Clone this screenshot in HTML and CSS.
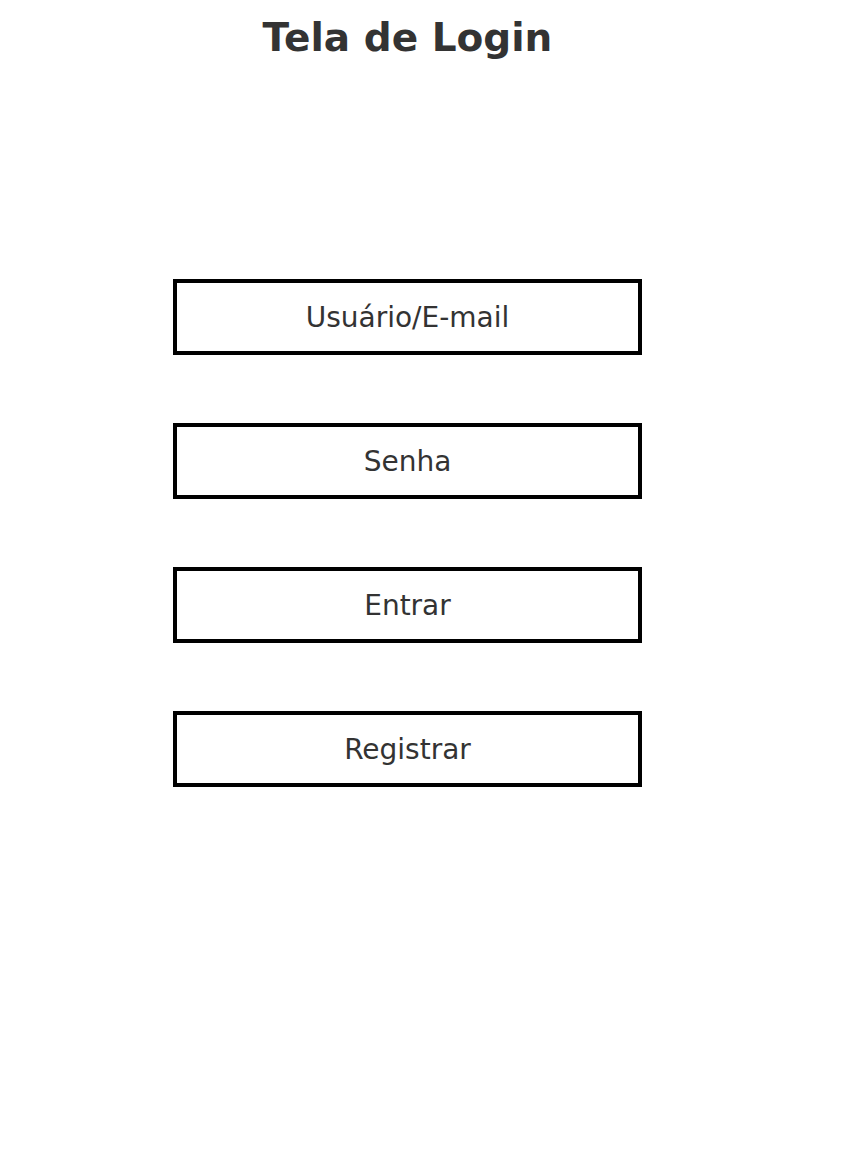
FILE: index.html
```html
<!DOCTYPE html>
<html lang="pt-BR">
<head>
<meta charset="utf-8">
<meta name="viewport" content="width=device-width, initial-scale=1">
<title>Tela de Login</title>
<link rel="stylesheet" href="styles.css">
</head>
<body>
<main class="screen">
  <h1 class="title">Tela de Login</h1>
  <form class="login">
    <input class="control" type="text" placeholder="Usuário/E-mail" aria-label="Usuário/E-mail" autocomplete="username">
    <input class="control" type="password" placeholder="Senha" aria-label="Senha" autocomplete="current-password">
    <button class="control" type="submit">Entrar</button>
    <button class="control" type="button">Registrar</button>
  </form>
</main>
</body>
</html>
```
FILE: styles.css
```css
* {
  box-sizing: border-box;
}

body {
  margin: 0;
  background: #fff;
  color: #333;
  font-family: "DejaVu Sans", Verdana, sans-serif;
}

.screen {
  display: flex;
  flex-direction: column;
  align-items: center;
  padding: 15px 49px 15px 0;
}

.title {
  margin: 0 0 218px;
  font-size: 39px;
  line-height: 46px;
  font-weight: 700;
  text-align: center;
}

.login {
  display: grid;
  gap: 68px;
  width: 57.5%;
}

.control {
  width: 100%;
  height: 76px;
  margin: 0;
  padding: 0 16px;
  border: 4px solid #000;
  border-radius: 0;
  background: #fff;
  color: #333;
  font: inherit;
  font-size: 28px;
  text-align: center;
}

.control::placeholder {
  color: #333;
  opacity: 1;
}

button.control {
  cursor: pointer;
}
```
